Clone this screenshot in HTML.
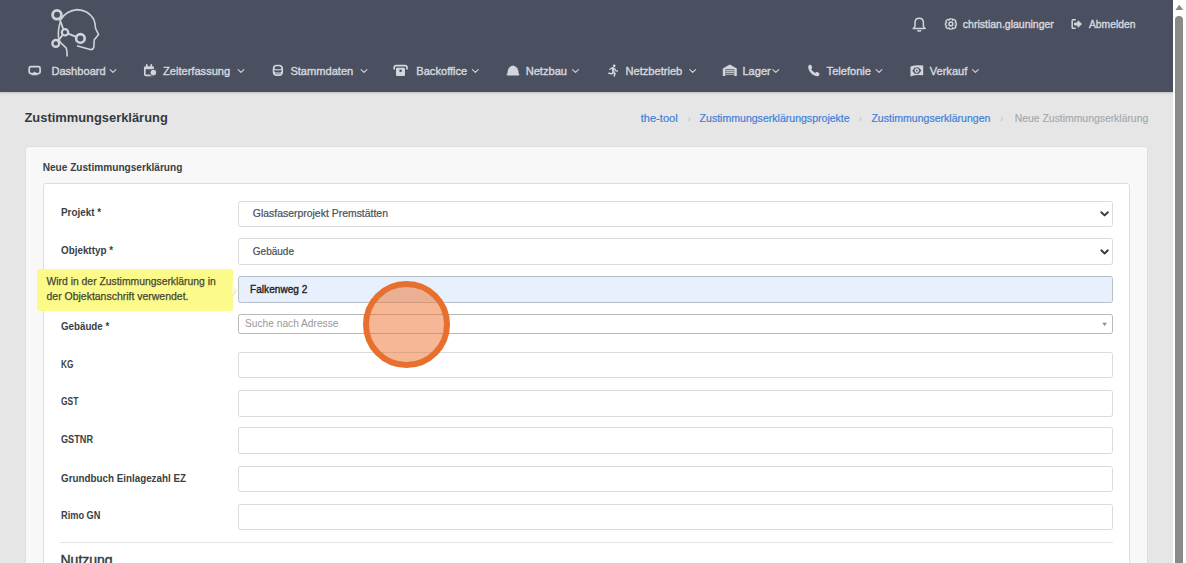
<!DOCTYPE html>
<html><head><meta charset="utf-8"><title>Zustimmungserklärung</title>
<style>
*{margin:0;padding:0;box-sizing:border-box}
html,body{width:1186px;height:563px;overflow:hidden;background:#e6e6e6;font-family:"Liberation Sans",sans-serif}
.t{position:absolute;white-space:nowrap;line-height:20px}
.b{position:absolute}
#hdr{position:absolute;left:0;top:0;width:1173px;height:92px;background:#4a5060;box-shadow:0 1px 2px rgba(0,0,0,.18)}
#sb{position:absolute;left:1173px;top:0;width:13px;height:563px;background:#fff}
#thumb{position:absolute;left:1175px;top:16px;width:8px;height:560px;background:#8a8a8a;border-radius:4px}
#card{position:absolute;left:25px;top:146px;width:1123px;height:500px;background:#f8f8f8;border:1px solid #dedfe2;border-radius:3px}
#panel{position:absolute;left:43px;top:183px;width:1087px;height:500px;background:#fff;border:1px solid #dcdde0;border-radius:3px}
.in{position:absolute;left:238px;width:875px;height:27px;background:#fff;border:1px solid #d9dadc;border-radius:2.5px}
.tip{position:absolute;left:37px;top:269px;width:196px;height:42px;background:#fdfa8c;border-radius:2px}
#circ{position:absolute;left:363px;top:281px;width:87px;height:87px;border-radius:50%;border:6px solid #e8702e;background:rgba(236,112,44,.5)}
</style></head>
<body>
<div id="hdr"></div><svg class="b" style="left:0;top:0" width="1172" height="92" viewBox="0 0 1172 92" fill="none" stroke="#d2d5db" stroke-linecap="round" stroke-linejoin="round"><g stroke="#d0d3d9" stroke-width="1.6"><circle cx="57" cy="14.8" r="4.4" stroke-width="2.8"/><circle cx="65" cy="32.3" r="3.2" stroke-width="2.2"/><circle cx="80.4" cy="38.4" r="4.3" stroke-width="2.6"/><circle cx="55.8" cy="43.4" r="3.4" stroke-width="2.4"/><path d="M59.6 19 L63.3 29.2 M68 33.6 L76.4 36.8 M62.6 35 L58.4 40.4" stroke-width="1.9"/><path d="M61.2 19.2 Q65.5 11.2 76.8 9.6 Q88 9.8 93.6 19 Q95.4 23 95.6 28.5 L98.6 34.6 L94.3 39.8 L93.8 47.3 Q93 49.8 90.3 49.6 L77.6 45.9"/><path d="M60.2 22.5 Q57.6 30 58.6 38.5 Q59.2 41.5 61.5 43.5 L65.8 47.6 Q67.1 49.2 67.1 56"/></g><g stroke-width="1.7"><rect x="29.2" y="66.6" width="10.9" height="7" rx="1.6"/><path d="M31.2 75.2 L34.6 71.6 L38 75.2 Z" fill="#d2d5db" stroke="none"/><rect x="144.8" y="67.4" width="8.4" height="7.9" rx="1"/><path d="M144.2 66.6 H153.8 V69.2 H144.2Z" fill="#d2d5db" stroke="none"/><path d="M146.8 64.8 V66.8 M151.3 64.8 V66.8"/><circle cx="153.4" cy="72.6" r="3.4" fill="#d2d5db" stroke="#4a5060" stroke-width="1"/><rect x="273.6" y="65.5" width="8.6" height="9.7" rx="3.2"/><path d="M273.8 69 Q278 70.8 282.1 69 M273.8 72.2 Q278 74 282.1 72.2" stroke-width="1.2"/><path d="M394.2 68.8 V67.4 Q394.2 65.6 396.2 65.6 H405 Q407 65.6 407 67.4 V68.8"/><rect x="396" y="67.8" width="9" height="8.2" rx="1" fill="#d2d5db" stroke="none"/><circle cx="400.6" cy="70.7" r="1.3" fill="#4a5060" stroke="none"/><path d="M507.5 74.2 Q507.2 66.4 513 65.4 Q518.8 66.4 518.6 74.2 Z" fill="#d2d5db" stroke="none"/><rect x="506.6" y="73.4" width="12.8" height="2.2" rx="1.1" fill="#d2d5db" stroke="none"/><circle cx="614.2" cy="65.8" r="1.35" fill="#d2d5db" stroke="none"/><path d="M612.6 68.2 L613.6 72.2" stroke-width="2.2"/><path d="M609.8 69.2 L612.4 67.8 L614.6 68.6 L615.8 70.6 L617.4 71" stroke-width="1.3"/><path d="M613.6 72.2 L615 73.6 L614.2 76 M613.2 72.6 L611.6 73.8 L608.8 73.2" stroke-width="1.5"/><path d="M722.8 68.4 L729.8 64.6 L736.8 68.4 V76 H722.8 Z" fill="#d2d5db" stroke="none"/><rect x="725.3" y="69.3" width="9" height="6.7" fill="#4a5060" stroke="none"/><path d="M725.8 70.6 H733.8 M725.8 72.4 H733.8 M725.8 74.2 H733.8" stroke="#bfc2c8" stroke-width="1.1"/><path d="M809.6 64.8 Q808.3 65.3 808.1 66.8 Q808.5 71.5 812.5 74.5 Q815.5 76.6 818 76.2 Q819.5 75.6 819.4 74.3 L819.2 73 L816.6 71.8 L815.2 73 Q812.6 71.8 811.2 69.2 L812.3 67.8 L811.2 65 Z" fill="#d2d5db" stroke="none"/><path d="M910.5 66.6 Q916.5 64.4 923.2 65.6 V75.3 Q916.5 74.2 910.5 76.4 Z" fill="#d2d5db" stroke="none"/><path d="M912.3 70.7 L914.8 67.4 H918.8 L921.3 70.5 L918.8 73.8 H914.8 Z" fill="#4a5060" stroke="none"/><circle cx="916.8" cy="70.6" r="2.3" fill="#d2d5db" stroke="none"/><circle cx="916.8" cy="70.6" r="0.9" fill="#4a5060" stroke="none"/></g><g stroke-width="1.1"><path d="M110.1 69.6 L113.0 72.4 L115.9 69.6"/><path d="M238.1 69.6 L241.0 72.4 L243.9 69.6"/><path d="M361.1 69.6 L364.0 72.4 L366.9 69.6"/><path d="M472.4 69.6 L475.3 72.4 L478.2 69.6"/><path d="M572.6 69.6 L575.5 72.4 L578.4 69.6"/><path d="M689.8 69.6 L692.7 72.4 L695.6 69.6"/><path d="M772.9 69.6 L775.8 72.4 L778.7 69.6"/><path d="M876.1 69.6 L879.0 72.4 L881.9 69.6"/><path d="M972.5 69.6 L975.4 72.4 L978.3 69.6"/></g><g stroke-width="1.5"><path d="M913.2 28.6 H925.2 L923.4 26.4 V22.6 Q923.4 18.2 919.2 18.2 Q915 18.2 915 22.6 V26.4 Z"/><path d="M917.8 30.6 Q919.2 31.6 920.6 30.6"/><circle cx="950.9" cy="23.9" r="1.9"/><path d="M949.6 18.8 H952.2 L952.7 20.3 L954.3 19.4 L956 21.2 L955.1 22.7 L956.4 23.2 V25 L955.1 25.4 L956 27 L954.3 28.6 L952.7 27.8 L952.2 29.1 H949.6 L949.1 27.8 L947.5 28.6 L945.8 27 L946.7 25.4 L945.4 25 V23.2 L946.7 22.7 L945.8 21.2 L947.5 19.4 L949.1 20.3 Z" stroke-width="1.3"/><path d="M1075.2 19.8 H1072.8 Q1072.2 19.8 1072.2 20.6 V27.4 Q1072.2 28.2 1072.8 28.2 H1075.2"/><path d="M1075 23 H1078 V20.8 L1081.6 24 L1078 27.2 V25 H1075 Z" fill="#d2d5db" stroke-width="1"/></g></svg><div id="card"></div><div id="panel"></div><div class="in" style="top:201px;height:26px"></div><div class="in" style="top:238px;height:27px"></div><div class="in" style="top:276px;height:27px;background:#e7f0fc;border-color:#b6bec8"></div><div class="in" style="top:314px;height:20px;border-color:#b9b9b9"></div><div class="in" style="top:352px;height:26px"></div><div class="in" style="top:390px;height:27px"></div><div class="in" style="top:427px;height:27px"></div><div class="in" style="top:466px;height:26px"></div><div class="in" style="top:504px;height:26px"></div><svg class="b" style="left:1096px;top:205px" width="18" height="56" viewBox="1096 205 18 56" fill="none" stroke="#343a40" stroke-width="1.9" stroke-linecap="round" stroke-linejoin="round"><path d="M1101.3 212.2 L1104.6 215.4 L1107.9 212.2"/><path d="M1101.3 250.3 L1104.6 253.5 L1107.9 250.3"/></svg><svg class="b" style="left:1096px;top:318px" width="16" height="12" viewBox="1096 318 16 12"><path d="M1102.3 322.8 H1106.9 L1104.6 325.9 Z" fill="#888"/></svg><div class="b" style="left:60px;top:542px;width:1053px;height:1px;background:#e6e6e6"></div><div class="t" style="left:51.40px;top:61px;font-size:11.1px;font-weight:normal;color:#d4d7dd;-webkit-text-stroke:0.4px #d4d7dd">Dashboard</div>
<div class="t" style="left:163.00px;top:61px;font-size:11.1px;font-weight:normal;color:#d4d7dd;-webkit-text-stroke:0.4px #d4d7dd">Zeiterfassung</div>
<div class="t" style="left:290.40px;top:61px;font-size:11.1px;font-weight:normal;color:#d4d7dd;-webkit-text-stroke:0.4px #d4d7dd">Stammdaten</div>
<div class="t" style="left:416.30px;top:61px;font-size:11.1px;font-weight:normal;color:#d4d7dd;-webkit-text-stroke:0.4px #d4d7dd">Backoffice</div>
<div class="t" style="left:525.70px;top:61px;font-size:11.1px;font-weight:normal;color:#d4d7dd;-webkit-text-stroke:0.4px #d4d7dd">Netzbau</div>
<div class="t" style="left:625.50px;top:61px;font-size:11.1px;font-weight:normal;color:#d4d7dd;-webkit-text-stroke:0.4px #d4d7dd">Netzbetrieb</div>
<div class="t" style="left:742.40px;top:61px;font-size:11.1px;font-weight:normal;color:#d4d7dd;-webkit-text-stroke:0.4px #d4d7dd">Lager</div>
<div class="t" style="left:826.60px;top:61px;font-size:11.1px;font-weight:normal;color:#d4d7dd;-webkit-text-stroke:0.4px #d4d7dd">Telefonie</div>
<div class="t" style="left:929.70px;top:61px;font-size:11.1px;font-weight:normal;color:#d4d7dd;-webkit-text-stroke:0.4px #d4d7dd">Verkauf</div>
<div class="t" style="left:962.80px;top:14px;font-size:10.5px;font-weight:normal;color:#d4d7dd;-webkit-text-stroke:0.4px #d4d7dd">christian.glauninger</div>
<div class="t" style="left:1089.00px;top:15px;font-size:10.3px;font-weight:normal;color:#d4d7dd;-webkit-text-stroke:0.4px #d4d7dd">Abmelden</div>
<div class="t" style="left:24.50px;top:108px;font-size:12.9px;font-weight:bold;color:#343a40;">Zustimmungserklärung</div>
<div class="t" style="left:640.70px;top:108px;font-size:11.1px;font-weight:normal;color:#3f7fd8;-webkit-text-stroke:0.2px #3f7fd8">the-tool</div>
<div class="t" style="left:699.60px;top:108px;font-size:10.55px;font-weight:normal;color:#3f7fd8;-webkit-text-stroke:0.2px #3f7fd8">Zustimmungserklärungsprojekte</div>
<div class="t" style="left:871.40px;top:108px;font-size:10.55px;font-weight:normal;color:#3f7fd8;-webkit-text-stroke:0.2px #3f7fd8">Zustimmungserklärungen</div>
<div class="t" style="left:1014.80px;top:109px;font-size:10.4px;font-weight:normal;color:#a5a8ad;-webkit-text-stroke:0.15px #a5a8ad">Neue Zustimmungserklärung</div>
<div class="t" style="left:687.50px;top:109px;font-size:10px;font-weight:normal;color:#c4c6ca;">›</div>
<div class="t" style="left:858.50px;top:109px;font-size:10px;font-weight:normal;color:#c4c6ca;">›</div>
<div class="t" style="left:1000.00px;top:109px;font-size:10px;font-weight:normal;color:#c4c6ca;">›</div>
<div class="t" style="left:42.70px;top:158px;font-size:10.1px;font-weight:bold;color:#3a3f45;">Neue Zustimmungserklärung</div>
<div class="t" style="left:60.80px;top:203px;font-size:10.3px;font-weight:bold;color:#3a3f45;transform:scaleX(0.957);transform-origin:0 0">Projekt *</div>
<div class="t" style="left:60.80px;top:241px;font-size:10.3px;font-weight:bold;color:#3a3f45;transform:scaleX(0.956);transform-origin:0 0">Objekttyp *</div>
<div class="t" style="left:60.80px;top:317px;font-size:10.3px;font-weight:bold;color:#3a3f45;transform:scaleX(0.947);transform-origin:0 0">Gebäude *</div>
<div class="t" style="left:60.80px;top:355px;font-size:10.3px;font-weight:bold;color:#3a3f45;transform:scaleX(0.800);transform-origin:0 0">KG</div>
<div class="t" style="left:60.80px;top:392px;font-size:10.3px;font-weight:bold;color:#3a3f45;transform:scaleX(0.818);transform-origin:0 0">GST</div>
<div class="t" style="left:60.80px;top:430px;font-size:10.3px;font-weight:bold;color:#3a3f45;transform:scaleX(0.889);transform-origin:0 0">GSTNR</div>
<div class="t" style="left:60.80px;top:469px;font-size:10.3px;font-weight:bold;color:#3a3f45;transform:scaleX(0.954);transform-origin:0 0">Grundbuch Einlagezahl EZ</div>
<div class="t" style="left:60.80px;top:506px;font-size:10.3px;font-weight:bold;color:#3a3f45;transform:scaleX(0.895);transform-origin:0 0">Rimo GN</div>
<div class="t" style="left:252.80px;top:204px;font-size:10.44px;font-weight:normal;color:#495057;-webkit-text-stroke:0.2px #495057">Glasfaserprojekt Premstätten</div>
<div class="t" style="left:252.80px;top:242px;font-size:10.0px;font-weight:normal;color:#495057;-webkit-text-stroke:0.2px #495057">Gebäude</div>
<div class="t" style="left:250.10px;top:280px;font-size:10.1px;font-weight:normal;color:#222;-webkit-text-stroke:0.35px #222">Falkenweg 2</div>
<div class="t" style="left:245.00px;top:314px;font-size:10.2px;font-weight:normal;color:#999;">Suche nach Adresse</div>
<div class="t" style="left:60.50px;top:550px;font-size:14.0px;font-weight:normal;color:#343a40;-webkit-text-stroke:0.45px #343a40">Nutzung</div>
<div class="tip"></div><svg class="b" style="left:231px;top:282px" width="8" height="16" viewBox="231 282 8 16"><path d="M232 284 L237 290.2 L232 296.5 Z" fill="#fbf9c4"/><path d="M237 290.2 L232.5 296" stroke="#d8d8e0" stroke-width="0.8" fill="none"/></svg><div class="t" style="left:46.50px;top:272px;font-size:10.36px;font-weight:normal;color:#474730;-webkit-text-stroke:0.25px #474730">Wird in der Zustimmungserklärung in</div>
<div class="t" style="left:46.50px;top:287px;font-size:10.47px;font-weight:normal;color:#474730;-webkit-text-stroke:0.25px #474730">der Objektanschrift verwendet.</div>
<div id="circ"></div><div id="sb"></div><div id="thumb"></div><svg class="b" style="left:1172px;top:0" width="14" height="14" viewBox="1172 0 14 14"><path d="M1175.4 10.1 L1179.3 4.8 L1183.2 10.1 Z" fill="#888"/></svg>
</body></html>
